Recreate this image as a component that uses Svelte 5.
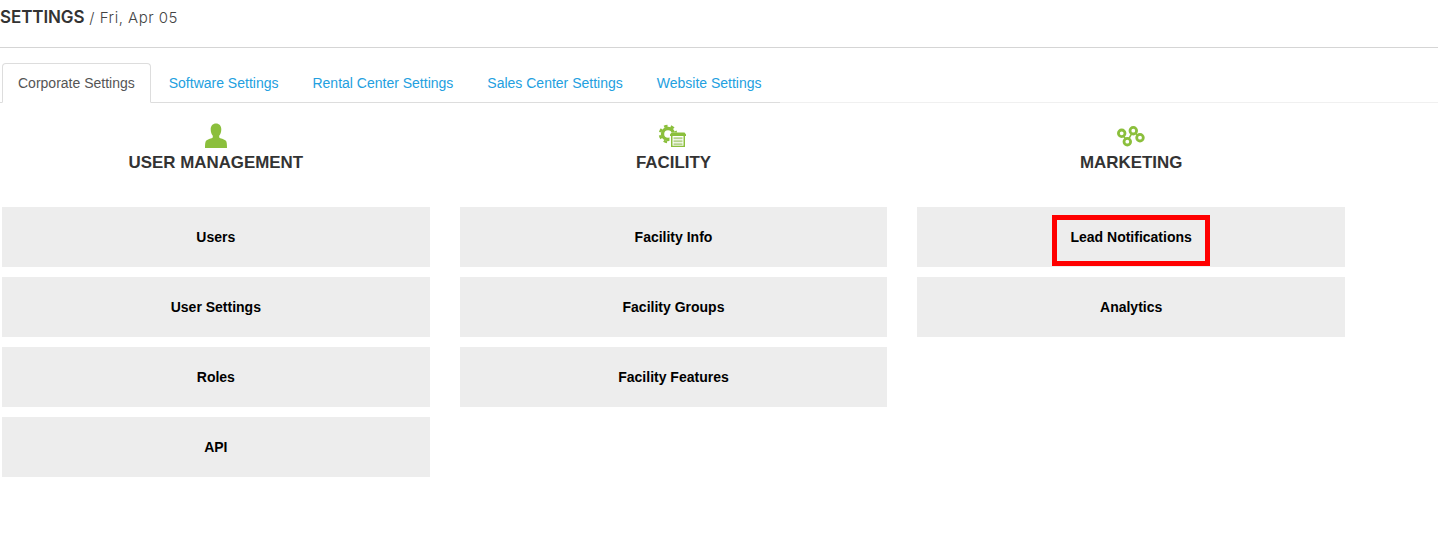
<script>
  const sections = [
    { title: 'USER MANAGEMENT', icon: 'user', items: ['Users', 'User Settings', 'Roles', 'API'] },
    { title: 'FACILITY', icon: 'facility', items: ['Facility Info', 'Facility Groups', 'Facility Features'] },
    { title: 'MARKETING', icon: 'marketing', items: ['Lead Notifications', 'Analytics'] }
  ];
  const tabs = ['Corporate Settings', 'Software Settings', 'Rental Center Settings', 'Sales Center Settings', 'Website Settings'];
</script>

<div class="page">
  <header class="top">
    <span class="title">SETTINGS</span>
    <span class="date">/ Fri, Apr 05</span>
  </header>

  <nav class="tabs">
    <div class="tab-strip">
      {#each tabs as tab, i}
        <span class="tab" class:active={i === 0}>{tab}</span>
      {/each}
    </div>
  </nav>

  <main class="columns">
    {#each sections as section}
      <section class="column">
        <div class="icon">
          <svg width="30" height="26" viewBox="0 0 30 26">
            {#if section.icon === 'user'}
              <path fill="#8bbf3c" transform="translate(3.500 0)" d="M11.500 0.500c3.300 0 5.300 2.400 5.300 5.800 0 2.600-0.800 5-2.100 6.500v1.700c0.600 1 5.200 1.600 6.700 3.200 0.900 1 1.100 3.800 1.100 7.300H0.500c0-3.500 0.200-6.300 1.100-7.300 1.500-1.600 6.100-2.200 6.700-3.200v-1.700C7 11.300 6.200 8.900 6.200 6.300c0-3.400 2-5.800 5.300-5.800z"/>
            {:else if section.icon === 'facility'}
              <circle cx="10" cy="11" r="5.500" fill="none" stroke="#8bbf3c" stroke-width="3.400"/>
              <circle cx="10" cy="11" r="8" fill="none" stroke="#8bbf3c" stroke-width="2.500" stroke-dasharray="3.500 3.200"/>
              <path fill="#fff" d="M11.500 9.500h17.500v16.500H11.500z"/>
              <path fill="#8bbf3c" d="M12 11.500l1.500-2h13l1.500 2v1.500H12zM13 13h1.500v11H13zM25.500 13H27v11h-1.500zM13 22.800h14V24H13z"/>
              <path fill="#b7d48c" d="M15.500 14.200h9v2h-9zM15.500 17.200h9v2h-9zM15.500 20.200h9v2h-9z"/>
            {:else}
              <path fill="none" stroke="#8bbf3c" stroke-width="1.600" d="M5.700 10.300L11.300 18.700L17.300 7.700L24 14.700"/>
              <g fill="#fff" stroke="#8bbf3c" stroke-width="2.800">
                <circle cx="5.700" cy="10.300" r="3.300"/>
                <circle cx="11.300" cy="18.700" r="3.300"/>
                <circle cx="17.300" cy="7.700" r="3.300"/>
                <circle cx="24" cy="14.700" r="3.300"/>
              </g>
            {/if}
          </svg>
        </div>
        <h2>{section.title}</h2>
        <div class="buttons">
          {#each section.items as item}
            <div class="btn">
              {#if item === 'Lead Notifications'}<span class="highlight"></span>{/if}
              {item}
            </div>
          {/each}
        </div>
      </section>
    {/each}
  </main>
</div>

<style>
  :global(body) {
    margin: 0;
    background: #fff;
  }

  .page {
    height: 535px;
    overflow: hidden;
    font-family: "Liberation Sans", Arial, sans-serif;
    font-size: 14px;
  }

  .top {
    box-sizing: border-box;
    height: 48px;
    padding-top: 8px;
    margin-bottom: 15px;
    border-bottom: 1px solid #d5d5d5;
    line-height: 19px;
    font-family: Inter, sans-serif;
    color: #333;
  }

  .title {
    font-size: 17px;
    font-weight: 600;
    letter-spacing: -0.1px;
  }

  .date {
    margin-left: 1px;
    font-size: 15px;
    font-weight: 300;
    letter-spacing: 0.5px;
    color: #444;
  }

  .tabs {
    box-sizing: border-box;
    height: 40px;
    border-bottom: 1px solid #f0f0f0;
  }

  .tab-strip {
    display: flex;
    box-sizing: border-box;
    width: fit-content;
    height: 40px;
    padding-left: 2px;
    border-bottom: 1px solid #ddd;
  }

  .tab {
    box-sizing: border-box;
    height: 40px;
    padding: 9px 15px;
    margin-right: 2px;
    border: 1px solid transparent;
    border-radius: 4px 4px 0 0;
    line-height: 20px;
    color: #23a0e0;
  }

  .tab.active {
    color: #555;
    background: #fff;
    border-color: #ddd #ddd #fff;
  }

  .columns {
    display: grid;
    grid-template-columns: repeat(3, 427.67px);
    gap: 30px;
    padding-left: 2px;
  }

  .column {
    display: flex;
    flex-direction: column;
  }

  .icon {
    box-sizing: border-box;
    height: 49px;
    padding-top: 20px;
    display: flex;
    justify-content: center;
  }

  h2 {
    margin: 0 0 34px;
    height: 21px;
    line-height: 21px;
    font-size: 16.9px;
    font-weight: bold;
    text-align: center;
    color: #333;
  }

  .buttons {
    display: flex;
    flex-direction: column;
    gap: 10px;
  }

  .btn {
    position: relative;
    height: 60px;
    line-height: 60px;
    background: #ededed;
    text-align: center;
    font-weight: bold;
    color: #000;
  }

  .highlight {
    position: absolute;
    left: 135px;
    top: 8px;
    width: 158px;
    height: 51px;
    box-sizing: border-box;
    border: 5px solid #f00;
  }
</style>
